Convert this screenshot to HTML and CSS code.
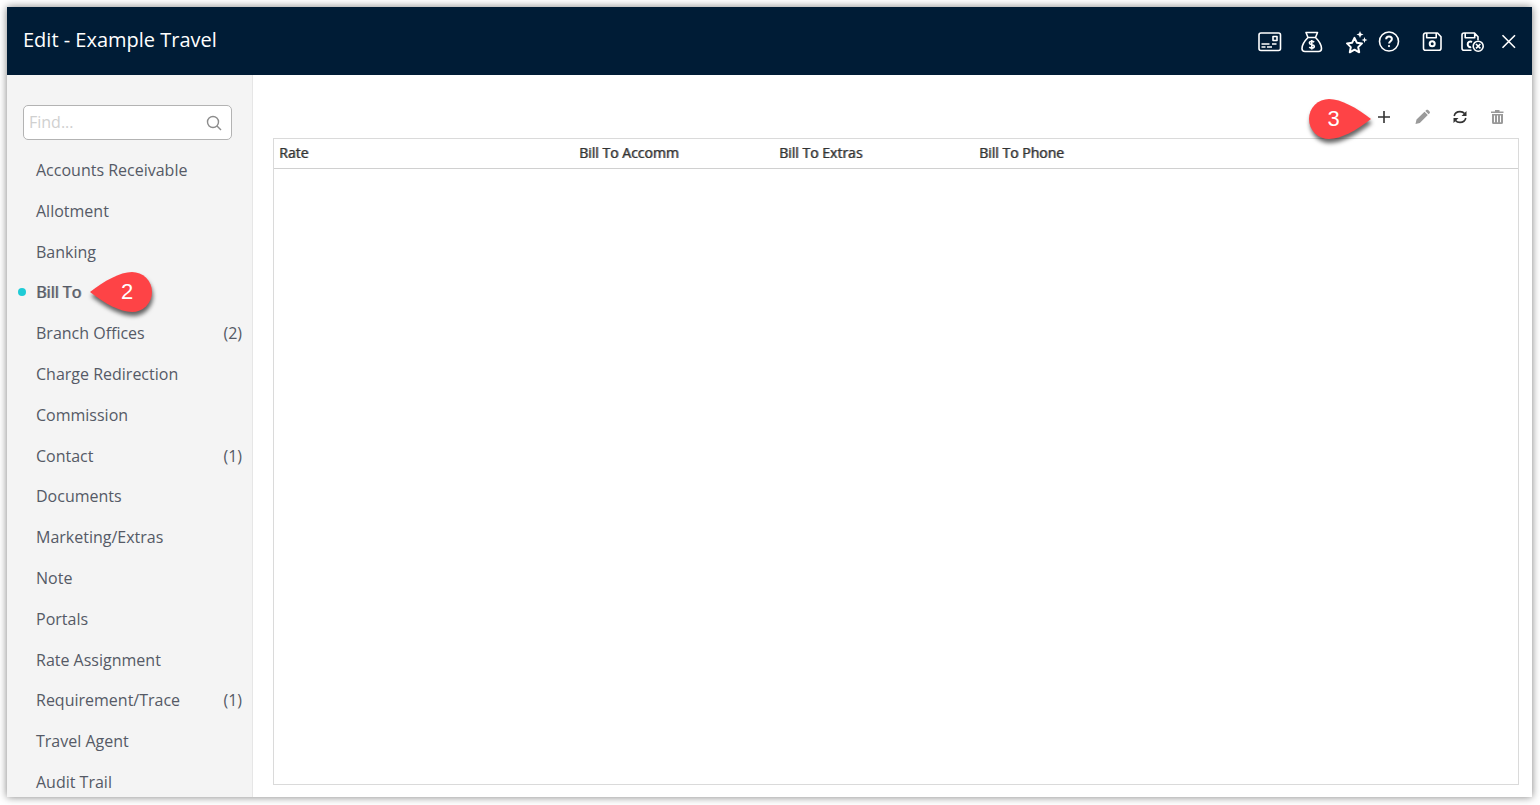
FILE: index.html
```html
<!DOCTYPE html>
<html lang="en">
<head>
<meta charset="utf-8">
<title>Edit - Example Travel</title>
<link rel="stylesheet" href="styles.css">
</head>
<body>
<div class="dialog">
  <header class="titlebar">
    <h1 class="title">Edit - Example Travel</h1>
    <div class="actions">
      <div class="group wide">
        <button type="button" aria-label="Card"><svg class="icon" viewBox="0 0 24 24"><rect x="2" y="3" width="21.500" height="17.500" rx="2"/><rect x="16" y="6.500" width="4" height="4"/><path d="M4.500 14h8M15 14h4.500M4.500 17h4M10 17h5"/></svg></button>
        <button type="button" aria-label="Rates"><svg class="icon" viewBox="0 0 24 24"><path d="M9 7.500L7 2.500h11.500l-2 5zM9 7.500C7 9.500 3 14 3 18.500c0 2 1 3 3 3h13.500c2 0 3-1 3-3 0-4.500-4-9-6-11"/><path d="M15.100 12.300c-.5-.7-1.300-1-2.300-1-1.400 0-2.400.6-2.400 1.700 0 2.300 4.900 1 4.900 3.300 0 1.200-1.100 1.800-2.500 1.800-1.100 0-2-.4-2.500-1.100M12.800 10v9.500"/></svg></button>
      </div>
      <div class="group tight">
        <button type="button" aria-label="Favourites"><svg class="icon" viewBox="0 0 24 24"><path class="heavy" d="M11.500 7.800l2.300 4.900 5.200.7-3.800 3.700 1 5.200-4.700-2.600-4.700 2.600 1-5.200L4 13.400l5.200-.7z"/><path class="solid" d="M17 1l1 2.500 2.500 1-2.500 1-1 2.500-1-2.500-2.500-1 2.500-1zM21.500 7l.8 2.200 2.200.8-2.200.8-.8 2.200-.8-2.200-2.200-.8 2.200-.8z"/></svg></button>
        <button type="button" aria-label="Help"><svg class="icon" viewBox="0 0 24 24"><circle cx="12" cy="11.500" r="9.500"/><path class="heavy" d="M9.200 9.300c0-1.700 1.100-2.700 2.800-2.700s2.900 1 2.900 2.500c0 2-2.800 2.200-2.800 4.400"/><circle class="solid" cx="12" cy="16.100" r="1.100"/></svg></button>
      </div>
      <div class="group">
        <button type="button" aria-label="Save"><svg class="icon" viewBox="0 0 24 24"><path d="M4.500 3H16.500L20 6.700v11.500a2 2 0 0 1-2 2H4.500a2 2 0 0 1-2-2V5a2 2 0 0 1 2-2zM5.700 3.200V7.700h9.500V3.200"/><circle class="heavy" cx="11.200" cy="13.700" r="2.500"/></svg></button>
        <button type="button" aria-label="Save and close"><svg class="icon" viewBox="0 0 24 24"><path d="M12.500 20.200H5a2 2 0 0 1-2-2V5a2 2 0 0 1 2-2H15.500L19 6.700v3.500M6.200 3.200V7.700h9.500V3.200"/><path class="heavy" d="M13 12c-2.200-1.200-4.300.2-4.300 2.300 0 2 1.600 3.300 3.500 2.800"/><circle cx="19.200" cy="16.200" r="5"/><path d="M17 14l4.400 4.400M21.400 14L17 18.400"/></svg></button>
        <button type="button" aria-label="Close"><svg class="icon" viewBox="0 0 24 24"><path d="M5.500 5.200l12.500 12.500M18 5.200L5.500 17.700"/></svg></button>
      </div>
    </div>
  </header>
  <div class="body">
    <aside class="sidebar">
      <div class="search">
        <input type="text" placeholder="Find..." aria-label="Find">
        <svg class="search-icon" viewBox="0 0 16 16"><circle cx="7" cy="7" r="5.500"/><path d="M11 11l4 4"/></svg>
      </div>
      <nav class="nav">
        <a href="#">Accounts Receivable</a>
        <a href="#">Allotment</a>
        <a href="#">Banking</a>
        <a href="#" class="current"><span class="strong">Bill To</span>
          <span class="callout left"><svg viewBox="0 0 62 40"><path d="M0 20C14 9 30 0 42 0a20 20 0 0 1 0 40C30 40 14 31 0 20z"/></svg><span class="number">2</span></span>
        </a>
        <a href="#">Branch Offices <span>(2)</span></a>
        <a href="#">Charge Redirection</a>
        <a href="#">Commission</a>
        <a href="#">Contact <span>(1)</span></a>
        <a href="#">Documents</a>
        <a href="#">Marketing/Extras</a>
        <a href="#">Note</a>
        <a href="#">Portals</a>
        <a href="#">Rate Assignment</a>
        <a href="#">Requirement/Trace <span>(1)</span></a>
        <a href="#">Travel Agent</a>
        <a href="#">Audit Trail</a>
      </nav>
    </aside>
    <main class="content">
      <div class="toolbar">
        <button type="button" class="add" aria-label="Add"><svg class="tool" viewBox="0 0 16 16"><path class="line" d="M8 2v12M2 8h12"/></svg>
          <span class="callout right"><svg viewBox="0 0 62 40"><path d="M62 20C48 9 32 0 20 0a20 20 0 0 0 0 40C32 40 48 31 62 20z"/></svg><span class="number">3</span></span>
        </button>
        <button type="button" class="off" aria-label="Edit"><svg class="tool" viewBox="0 0 16 16"><path d="M1.500 15l1-4.500L10.500 2.800l3.300 3.300L5.800 14zM11.300 2l1-1c.6-.5 1.300-.5 1.800 0l1.500 1.500c.5.500.5 1.200 0 1.800l-1 1z"/></svg></button>
        <button type="button" aria-label="Refresh"><svg class="tool" viewBox="0 0 16 16"><path class="line" d="M2.200 7C2.800 4.200 5 2.600 8 2.600c2 0 3.500.7 4.500 2M13.800 9c-.6 2.800-2.800 4.400-5.800 4.400-2 0-3.500-.7-4.500-2"/><path d="M14.500 2v5H9.500zM1.500 14V9H6.500z"/></svg></button>
        <button type="button" class="off" aria-label="Delete"><svg class="tool" viewBox="0 0 16 16"><path fill-rule="evenodd" d="M1 2.500h4V1h4.500v1.500h4V4H1zM2 5h11v8.500a1.500 1.500 0 0 1-1.500 1.500h-8A1.500 1.500 0 0 1 2 13.500zM4 6.500v6.700h1V6.500zM7 6.500v6.700h1V6.500zM10 6.500v6.700h1V6.500z"/></svg></button>
      </div>
      <div class="grid">
        <table>
          <thead>
            <tr><th class="rate">Rate</th><th class="bill">Bill To Accomm</th><th class="bill">Bill To Extras</th><th>Bill To Phone</th></tr>
          </thead>
        </table>
      </div>
    </main>
  </div>
</div>
</body>
</html>
```
FILE: styles.css
```css
* { box-sizing: border-box; }
body {
  margin: 0;
  padding: 7px 8px 8px 7px;
  height: 100vh;
  background: #fff;
  font-family: "Open Sans", sans-serif;
  color: #555a66;
}
button {
  display: flex;
  padding: 0;
  border: 0;
  background: none;
  color: inherit;
  font: inherit;
}
.dialog {
  display: flex;
  flex-direction: column;
  height: 100%;
  background: #fff;
  box-shadow: 0 0 8px rgba(0, 0, 0, 0.5);
}
.titlebar {
  display: flex;
  align-items: center;
  justify-content: space-between;
  height: 68px;
  padding: 0 11px 0 16px;
  background: #001c36;
  color: #fff;
}
.title {
  margin: 0;
  padding-bottom: 2px;
  font-size: 20px;
  font-weight: 400;
  line-height: 28px;
}
.actions { display: flex; gap: 20px; padding-top: 2px; }
.group { display: flex; gap: 14px; }
.group.wide { gap: 18px; }
.group.tight { gap: 10px; }
.icon {
  width: 24px;
  height: 24px;
  overflow: visible;
  fill: none;
  stroke: #fff;
  stroke-width: 1.6;
  stroke-linejoin: round;
}
.icon .heavy { stroke-width: 2; }
.icon .solid { fill: #fff; stroke: none; }

.body { display: flex; flex: 1; min-height: 0; }
.sidebar {
  display: flex;
  flex-direction: column;
  flex: none;
  width: 246px;
  padding: 30px 10px 4px 16px;
  background: #f4f4f4;
  border-right: 1px solid #e6e6e6;
}
.search { position: relative; margin: 0 10px 19px 0; }
.search input {
  display: block;
  width: 100%;
  height: 35px;
  padding: 0 30px 2px 5px;
  border: 1px solid #b3b3b3;
  border-radius: 5px;
  background: #fff;
  font: 16px "Open Sans", sans-serif;
}
.search input::placeholder { color: #d0d0d0; opacity: 1; }
.search-icon {
  position: absolute;
  right: 10px;
  top: 10px;
  width: 16px;
  height: 16px;
  fill: none;
  stroke: #8c8c8c;
  stroke-width: 1.4;
}
.nav {
  display: flex;
  flex-direction: column;
  justify-content: space-between;
  flex: 1;
  padding-left: 13px;
}
.nav a {
  position: relative;
  display: flex;
  justify-content: space-between;
  color: inherit;
  font-size: 16px;
  line-height: 22px;
  text-decoration: none;
}
.nav .current { align-self: flex-start; }
.strong { text-shadow: 1px 0 rgba(85, 90, 102, 0.7); }
.nav .current::before {
  content: "";
  position: absolute;
  left: -18px;
  top: 7px;
  width: 8px;
  height: 8px;
  border-radius: 50%;
  background: #1fcbd6;
}

.callout {
  position: absolute;
  width: 62px;
  height: 40px;
  color: #fff;
  font: 22px/40px "Liberation Sans", sans-serif;
  text-align: center;
}
.callout svg {
  display: block;
  width: 62px;
  height: 40px;
  overflow: visible;
  fill: #fe4346;
  filter: drop-shadow(1px 4px 2px rgba(0, 0, 0, 0.6));
}
.number { position: absolute; inset: 0; }
.callout.left { left: 54px; top: -9px; }
.callout.left .number { padding-left: 12px; }
.callout.right { right: 21px; top: -10px; }
.callout.right .number { padding-right: 13px; }

.content {
  display: flex;
  flex-direction: column;
  flex: 1;
  padding: 34px 13px 12px 20px;
}
.toolbar {
  display: flex;
  justify-content: flex-end;
  gap: 22px;
  padding: 0 13px 13px 0;
  color: #333;
}
.toolbar .add { position: relative; }
.toolbar .off { color: #9a9a9a; }
.tool { width: 16px; height: 16px; fill: currentColor; }
.tool .line { fill: none; stroke: currentColor; stroke-width: 1.6; }
.grid { flex: 1; border: 1px solid #dadada; }
table { width: 100%; table-layout: fixed; border-collapse: collapse; }
th {
  height: 29px;
  padding: 0 5px;
  border-bottom: 1px solid #d0d0d0;
  color: #333;
  font-size: 14px;
  font-weight: 400;
  line-height: 20px;
  text-align: left;
  text-shadow: 1px 0 rgba(51, 51, 51, 0.6);
}
.rate { width: 300px; }
.bill { width: 200px; }
```
